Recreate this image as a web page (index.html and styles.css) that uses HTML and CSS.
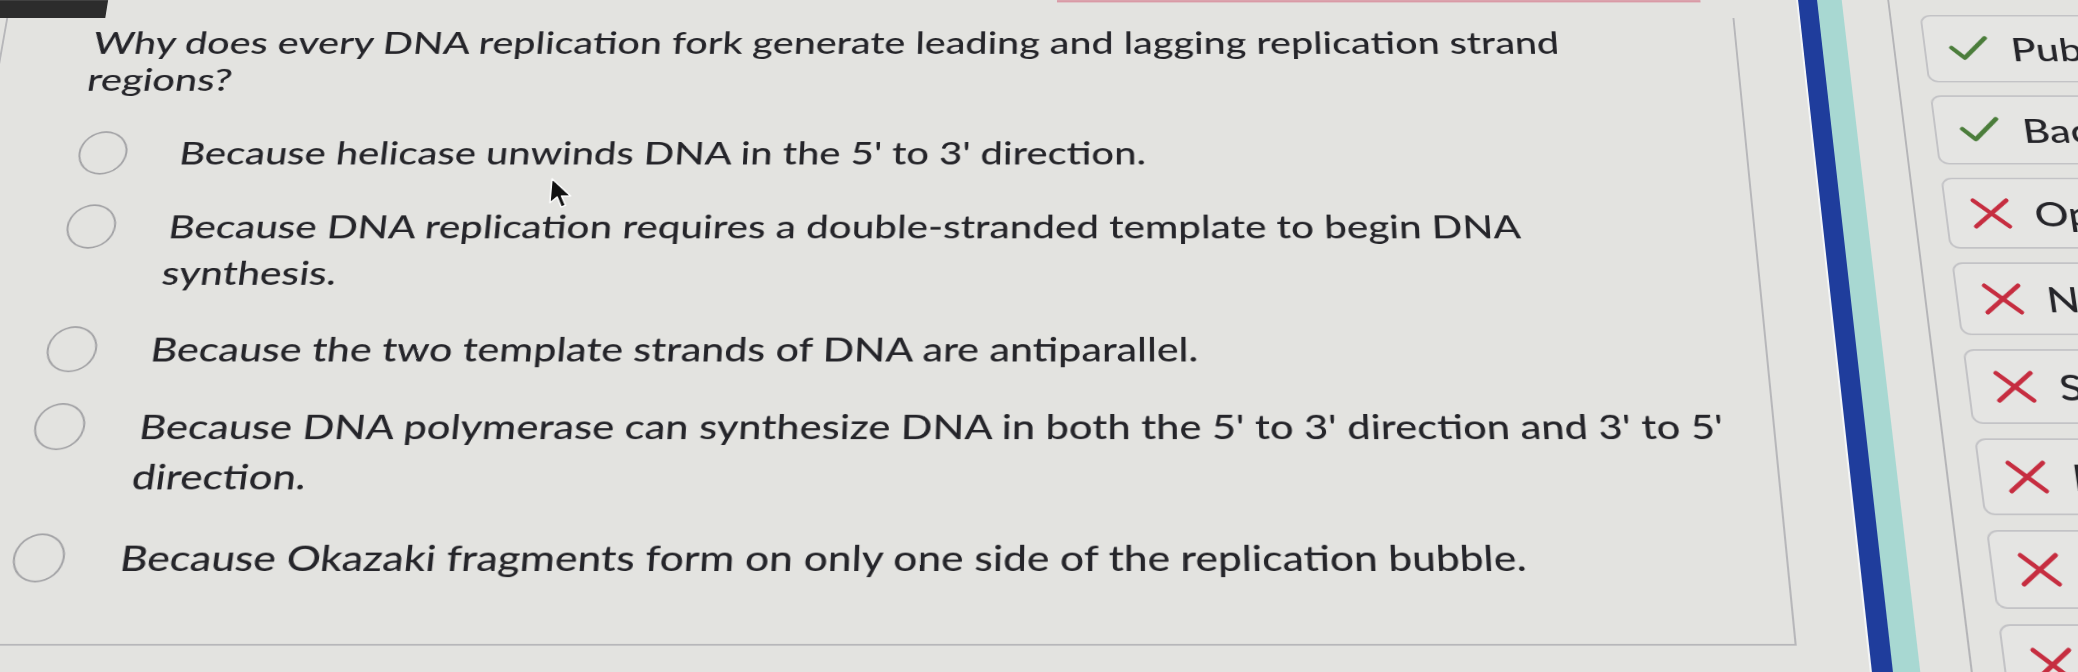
FILE: index.html
```html
<!DOCTYPE html>
<html lang="en">
<head>
<meta charset="utf-8">
<title>Question</title>
<link rel="stylesheet" href="styles.css">
</head>
<body>
<div class="stage">
  <div class="main">
    <div class="topstrip">
      <div class="darkblock"></div>
      <div class="pinkline"></div>
    </div>
    <section class="card">
      <h1 class="question">Why does every DNA replication fork generate leading and lagging replication strand regions?</h1>
      <ul class="options">
        <li class="option"><span class="radio"></span><span class="label">Because helicase unwinds DNA in the 5' to 3' direction.</span></li>
        <li class="option"><span class="radio"></span><span class="label">Because DNA replication requires a double-stranded template to begin DNA<br>synthesis.</span></li>
        <li class="option"><span class="radio"></span><span class="label">Because the two template strands of DNA are antiparallel.</span></li>
        <li class="option"><span class="radio"></span><span class="label">Because DNA polymerase can synthesize DNA in both the 5' to 3' direction and 3' to 5' direction.</span></li>
        <li class="option"><span class="radio"></span><span class="label">Because Okazaki fragments form on only one side of the replication bubble.</span></li>
      </ul>
      <svg class="cursor" viewBox="0 0 20 30" width="25" height="40" preserveAspectRatio="none"><path d="M1 1 L1 24 L6.5 18.5 L10.5 28 L14 26.5 L10 17.5 L17.5 17.5 Z" fill="#111" stroke="#fff" stroke-width="1.2" stroke-linejoin="round"/></svg>
    </section>
  </div>
  <div class="rail">
    <div class="rail-edge"></div>
    <div class="rail-blue"></div>
    <div class="rail-teal"></div>
  </div>
  <aside class="actions">
    <button class="action"><svg class="icon" viewBox="0 0 42 41" width="42" height="41"><path class="ok" d="M3 19 L15.5 32.5 L39 6"/></svg><span>Publish</span></button>
    <button class="action"><svg class="icon" viewBox="0 0 42 41" width="42" height="41"><path class="ok" d="M3 19 L15.5 32.5 L39 6"/></svg><span>Back</span></button>
    <button class="action"><svg class="icon" viewBox="0 0 42 41" width="42" height="41"><path class="no" d="M4 4 L38 37 M38 4 L4 37"/></svg><span>Open</span></button>
    <button class="action"><svg class="icon" viewBox="0 0 42 41" width="42" height="41"><path class="no" d="M4 4 L38 37 M38 4 L4 37"/></svg><span>New</span></button>
    <button class="action"><svg class="icon" viewBox="0 0 42 41" width="42" height="41"><path class="no" d="M4 4 L38 37 M38 4 L4 37"/></svg><span>Save</span></button>
    <button class="action"><svg class="icon" viewBox="0 0 42 41" width="42" height="41"><path class="no" d="M4 4 L38 37 M38 4 L4 37"/></svg><span>Print</span></button>
    <button class="action"><svg class="icon" viewBox="0 0 42 41" width="42" height="41"><path class="no" d="M4 4 L38 37 M38 4 L4 37"/></svg><span>Close</span></button>
    <button class="action"><svg class="icon" viewBox="0 0 42 41" width="42" height="41"><path class="no" d="M4 4 L38 37 M38 4 L4 37"/></svg><span>Exit</span></button>
  </aside>
</div>
</body>
</html>
```
FILE: styles.css
```css
html, body {
  margin: 0;
  width: 2078px;
  height: 672px;
  overflow: hidden;
  background: #e3e3e0;
}
body {
  font-family: Lato, "Noto Sans", sans-serif;
  color: #25252a;
}
.stage {
  display: flex;
  width: 2340px;
  height: 860px;
  margin: -110px 0 0 -90px;
  transform-origin: 1203px 446px;
  transform: perspective(4600px) rotateX(35deg);
}
.main {
  width: 1856px;
  flex: none;
  display: flex;
  flex-direction: column;
}
.topstrip {
  height: 38px;
  flex: none;
  display: flex;
}
.darkblock {
  width: 144px;
  height: 24px;
  margin-top: 14px;
  background: #2c2c2c;
}
.pinkline {
  width: 678px;
  height: 3px;
  margin: 14px 0 0 1000px;
  background: #d99aa6;
}
.card {
  position: relative;
  flex: none;
  width: 1816px;
  height: 769px;
  margin-left: 40px;
  box-sizing: border-box;
  border: 2px solid #b7b7ba;
  border-top: none;
  padding: 8px 0 0 94px;
}
.question {
  margin: 0;
  width: 1600px;
  font-size: 41.3px;
  font-weight: 500;
  line-height: 49px;
}
.options {
  list-style: none;
  margin: 43px 0 0 3px;
  padding: 0;
  display: flex;
  flex-direction: column;
  gap: 35px;
}
.option {
  display: flex;
  align-items: flex-start;
  gap: 54px;
}
.radio {
  flex: none;
  width: 50px;
  height: 56px;
  margin-top: 1px;
  box-sizing: border-box;
  border: 2px solid #a2a2a5;
  border-radius: 50%;
}
.label {
  width: 1580px;
  font-size: 41px;
  font-weight: 500;
  line-height: 58.6px;
}
.cursor {
  position: absolute;
  left: 585px;
  top: 210px;
}
.rail {
  flex: none;
  display: flex;
  margin-left: 67px;
}
.rail-edge { width: 2px; background: #f3f5f7; }
.rail-blue { width: 20px; background: #1f3d9c; }
.rail-teal { width: 26px; background: #a8d8d2; }
.actions {
  flex: none;
  width: 360px;
  margin-left: 48px;
  border-left: 2px solid #b5b5b8;
  padding: 34px 0 0 30px;
  display: flex;
  flex-direction: column;
  gap: 17px;
}
.action {
  flex: none;
  display: flex;
  align-items: center;
  gap: 23px;
  width: 320px;
  height: 90px;
  padding: 0 0 0 24px;
  box-sizing: border-box;
  background: #e5e5e3;
  border: 2px solid #c3c3c6;
  border-radius: 11px;
  font-family: Lato, "Noto Sans", sans-serif;
  font-size: 43px;
  font-weight: 500;
  color: #25252a;
}
.icon { flex: none; }
.ok {
  fill: none;
  stroke: #4b7d3b;
  stroke-width: 5;
  stroke-linecap: round;
  stroke-linejoin: round;
}
.no {
  fill: none;
  stroke: #c62d40;
  stroke-width: 5;
  stroke-linecap: round;
}
```
